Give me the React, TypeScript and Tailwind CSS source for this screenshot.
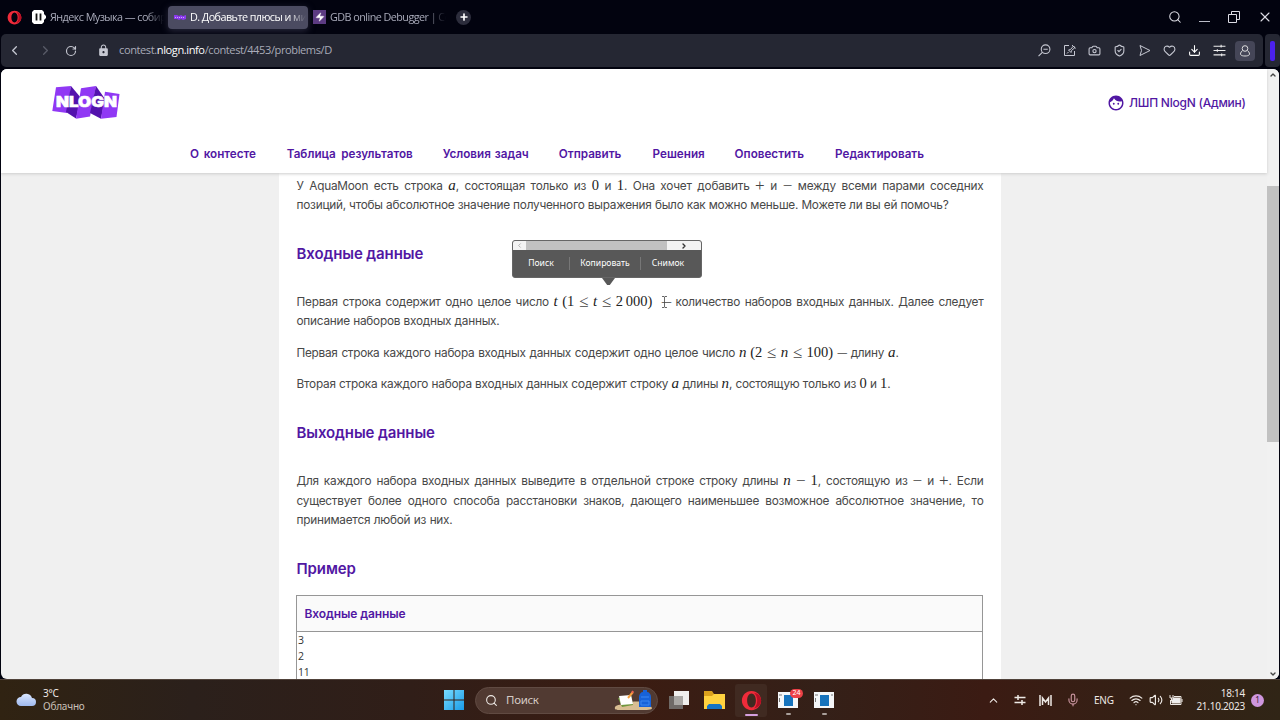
import type { ReactNode } from 'react';
import {
  Camera, ChevronDown, ChevronLeft, ChevronRight, ChevronUp, Download, Heart, Mic,
  Plus, RotateCw, Search, ShieldCheck, Volume2, Wifi, X, Zap,
} from 'lucide-react';
import { MdFace, MdLock } from 'react-icons/md';

const navItems = [
  { label: 'О контесте', width: 'w-[66px]', gap: 'mr-[30.8px]' },
  { label: 'Таблица результатов', width: 'w-[126px]', gap: 'mr-[30px]' },
  { label: 'Условия задач', width: 'w-[86px]', gap: 'mr-[30px]' },
  { label: 'Отправить', width: 'w-[64px]', gap: 'mr-[29.8px]' },
  { label: 'Решения', width: 'w-[52px]', gap: 'mr-[30px]' },
  { label: 'Оповестить', width: 'w-[71px]', gap: 'mr-[29.5px]' },
  { label: 'Редактировать', width: 'w-[90px]', gap: '' },
];

function Line({ width = 'w-[687px]', children }: { width?: string; children: ReactNode }) {
  return (
    <div className={`${width} h-[19.3px] leading-[19.3px] whitespace-nowrap [text-align-last:justify]`}>
      {children}
    </div>
  );
}

function Num({ children }: { children: ReactNode }) {
  return <span className="font-['Liberation_Serif',serif] text-[14.5px] leading-[0] tracking-normal text-[#222]">{children}</span>;
}

function Var({ children }: { children: ReactNode }) {
  return <span className="font-['Liberation_Serif',serif] text-[15px] leading-[0] tracking-normal italic text-[#222]">{children}</span>;
}

function Op({ children }: { children: ReactNode }) {
  return <span className="align-[-1px] font-['Liberation_Serif',serif] text-[17px] leading-[0] tracking-normal text-[#444]">{children}</span>;
}

function Dash() {
  return <span className="align-[1px] text-[9.500px] leading-[0]">—</span>;
}

function Heading({ children }: { children: ReactNode }) {
  return <h2 className="text-[15px] leading-[20px] font-semibold tracking-[-0.1px] text-[#5117a3] whitespace-nowrap">{children}</h2>;
}

function Logo() {
  return (
    <svg className="w-[70px] h-[36px]" viewBox="0 0 70 36">
      <path d="M5 2.300 20 1 16 28 1.300 26Z" fill="#9038f4" />
      <path d="M20 1 30 13 25 33.500 15 27Z" fill="#5312ad" />
      <path d="M30 3.300 45 1 39 31.500 25 33.700Z" fill="#9038f4" />
      <path d="M45 1 54 14 50 33.700 39 28Z" fill="#5312ad" />
      <path d="M54 6.700 68.500 9 65.500 32 50 33.700Z" fill="#9038f4" />
      <text x="5" y="22.300" fill="#fff" stroke="#fff" strokeWidth=".5" fontSize="14.500" fontWeight="900" fontFamily="Inter, sans-serif" textLength="61" lengthAdjust="spacingAndGlyphs">NLOGN</text>
    </svg>
  );
}

function OperaIcon({ className }: { className: string }) {
  return (
    <svg className={className} viewBox="0 0 24 24">
      <path fillRule="evenodd" fill="#ef2b3a" d="M12 1C5.600 1 1 6 1 12s4.600 11 11 11 11-5 11-11S18.400 1 12 1Zm0 3c3 0 5 3.600 5 8s-2 8-5 8-5-3.600-5-8 2-8 5-8Z" />
      <path fill="#b70f24" d="M15 3c5 1 8 4.600 8 9s-3 8-8 9c2-2 3.500-5 3.500-9S17 5 15 3Z" />
    </svg>
  );
}

function WindowIcon() {
  return (
    <svg className="w-5 h-4" viewBox="0 0 20 16">
      <path fill="#f4f6f8" d="M0 0h20v16H0z" />
      <path fill="#1673bd" d="M6 3h9v11H6z" />
      <path stroke="#777" d="M1 3h3M1.500 6v4M17 3h2" />
    </svg>
  );
}

function TabBar() {
  return (
    <div className="flex h-[34px] shrink-0 items-center font-['Open_Sans',sans-serif] text-[10.8px] tracking-[-0.55px] text-[#a9abba]">
      <OperaIcon className="ml-[7px] h-[15px] w-[15px]" />
      <svg className="ml-[10px] h-[14px] w-[14px]" viewBox="0 0 14 14">
        <path fill="#fff" d="M2 0h8l2 2v2l2 2v2l-2 2v2l-2 2H2l-2-2V2Z" />
        <path stroke="#111" strokeWidth="1.800" d="M4.500 3.500v7M8.500 3.500v7" />
      </svg>
      <span className="ml-[4px] w-[114px] whitespace-nowrap [mask-image:linear-gradient(90deg,#000_85%,transparent)]">Яндекс Музыка — собир</span>
      <div className="ml-[4px] flex h-[23px] w-[140px] items-center rounded-[4px] bg-[#4b4b61] pl-[6px] text-white shadow-[0_2px_7px_#28283c]">
        <svg className="h-[7px] w-[12px] shrink-0" viewBox="0 0 12 7">
          <path fill="#8b39ed" d="M0 1h3l2 1 2-1 2 1 3-1v4l-3 1-2-1-2 1-2-1H0Z" />
          <path stroke="#d2aaff" strokeDasharray="1 1" d="M1 3.500h10" />
        </svg>
        <span className="ml-[4px] w-[116px] whitespace-nowrap [mask-image:linear-gradient(90deg,#000_85%,transparent)]">D. Добавьте плюсы и ми</span>
      </div>
      <div className="ml-[5px] flex h-[14px] w-[13px] items-center justify-center bg-[#5c3b82]">
        <Zap className="h-[10px] w-[10px] fill-white text-white" strokeWidth={1} />
      </div>
      <span className="ml-[4px] w-[116px] whitespace-nowrap [mask-image:linear-gradient(90deg,#000_82%,transparent)]">GDB online Debugger | Co</span>
      <div className="ml-[10px] flex h-[15px] w-[15px] items-center justify-center rounded-full bg-[#2c2d3c]">
        <Plus className="h-[10px] w-[10px] text-white" strokeWidth={4} />
      </div>
      <div className="ml-auto flex items-center text-[#dddde5]">
        <Search className="mr-[17px] h-[14px] w-[14px]" strokeWidth={1.800} />
        <span className="mt-[9px] mr-[18px] h-px w-[11px] bg-[#bbbcc7]" />
        <svg className="mr-[17px] h-3 w-3" viewBox="0 0 12 12" fill="none" stroke="currentColor">
          <path d="M.5 3.500h8v8h-8zM3.500 3V.5h8v8H9" />
        </svg>
        <X className="mr-[7px] h-[16px] w-[16px]" strokeWidth={1.600} />
      </div>
    </div>
  );
}

function AddressBar() {
  return (
    <div className="flex h-[33px] shrink-0 gap-[2px] pl-px">
      <div className="flex flex-1 items-center rounded-[5px] bg-[#252733] text-[#c6c8d2]">
        <ChevronLeft className="ml-[6px] h-[15px] w-[15px]" strokeWidth={2} />
        <ChevronRight className="ml-[16px] h-[15px] w-[15px] text-[#5a5c69]" strokeWidth={2} />
        <RotateCw className="ml-[12px] h-[12px] w-[12px]" strokeWidth={2.300} />
        <MdLock className="ml-[20px] h-[13px] w-[13px]" />
        <span className="ml-[9px] w-[214px] pb-px font-['Open_Sans',sans-serif] text-[11.1px] tracking-[-0.42px] whitespace-nowrap text-[#a9abb8]">
          contest.<span className="text-white">nlogn.info</span>/contest/4453/problems/D
        </span>
        <div className="ml-auto flex items-center gap-[12px]">
          <svg className="h-[13px] w-[13px]" viewBox="0 0 12 12" fill="none" stroke="currentColor">
            <circle cx="7" cy="4.800" r="4" /><path d="m4 7.700-3.500 3.500M5 4.800h4" />
          </svg>
          <svg className="h-[13px] w-[13px]" viewBox="0 0 13 13" fill="none" stroke="currentColor">
            <path d="M6 1.500H1.500v10h10V7M4 9.500l1.500-1.500M5.500 6l2-.5 3-3.500 1.500 1.500-3.500 3-.5 2ZM9 1l3.500 3.500" />
          </svg>
          <Camera className="h-[13px] w-[13px]" />
          <ShieldCheck className="h-[13px] w-[13px]" />
          <svg className="h-[13px] w-[13px]" viewBox="0 0 13 13" fill="none" stroke="currentColor" strokeLinejoin="round">
            <path d="M2 1.500 12 6.500 2 11.500 3.500 6.500Z" />
          </svg>
          <Heart className="h-[13px] w-[13px]" />
          <Download className="h-[13px] w-[13px] text-white" />
          <svg className="h-[13px] w-[13px]" viewBox="0 0 12 12" fill="none" stroke="#eee">
            <path d="M.5 2h11M.5 6h11M.5 10h11M7.500.8v2.400M4 4.800v2.400M8 8.800v2.400" />
          </svg>
          <div className="-ml-[3px] mr-[8px] flex h-5 w-5 items-center justify-center rounded-[4px] bg-[#454657]">
            <svg className="h-3 w-3" viewBox="0 0 12 12" fill="none" stroke="#ddd">
              <circle cx="6" cy="3.500" r="2.800" /><path d="M3.500 5.500C-.5 9.500 2 11 6 11s6.500-1.500 2.500-5.500" />
            </svg>
          </div>
        </div>
      </div>
      <div className="flex w-[15px] items-center justify-center rounded-[4px] bg-[#252733]">
        <span className="h-5 w-[5px] rounded-[2px] bg-[#4b21ee]" />
      </div>
    </div>
  );
}

function SelectionPopup() {
  return (
    <div className="absolute top-[171px] left-[511px] w-[190px] font-['Noto_Sans',sans-serif] text-[8.600px] text-white">
      <div className="overflow-hidden rounded-[3px] border border-[#666] bg-[#585858]">
        <div className="flex h-[9px] items-center bg-[#f3f3f3]">
          <ChevronLeft className="h-[7px] w-[13px] text-[#aaa]" strokeWidth={3} />
          <span className="h-full w-[141px] bg-[#c1c1c1]" />
          <ChevronRight className="h-[8px] w-[34px] text-[#333]" strokeWidth={4} />
        </div>
        <div className="flex h-[27px] items-center">
          <span className="w-[56px] text-center">Поиск</span>
          <span className="h-[13px] w-px bg-[#777]" />
          <span className="w-[70px] text-center">Копировать</span>
          <span className="h-[13px] w-px bg-[#777]" />
          <span className="w-[54px] text-center">Снимок</span>
        </div>
      </div>
      <div className="ml-[90px] h-[7px] w-[13px] bg-[#585858] [clip-path:polygon(0_0,100%_0,60%_100%,40%_100%)]" />
    </div>
  );
}

function Page() {
  return (
    <main className="relative mx-px mt-[2px] flex h-[610px] shrink-0 overflow-hidden rounded-[6px] bg-[#f0f0f0] font-[Inter,sans-serif]">
      <div className="flex w-[1266px] flex-col">
        <header className="z-10 h-[104px] shrink-0 bg-white shadow-[0_1px_3px_#ccc]">
          <div className="flex h-[68px] items-center justify-between pr-[21px] pl-[50px]">
            <Logo />
            <div className="flex items-center text-[12px] font-medium tracking-[-0.23px] text-[#5117a3]">
              <MdFace className="mr-[4px] h-[18px] w-[18px]" />
              <span className="w-[117px] whitespace-nowrap">ЛШП NlogN (Админ)</span>
            </div>
          </div>
          <nav className="flex h-[36px] items-center pl-[189px] text-[11.7px] font-semibold text-[#5117a3]">
            {navItems.map((item) => (
              <a key={item.label} className={`${item.width} ${item.gap} whitespace-nowrap [text-align-last:justify]`}>{item.label}</a>
            ))}
          </nav>
        </header>

        <article className="ml-[278px] w-[722px] flex-1 overflow-hidden bg-white pl-[17.5px] text-[11.8px] tracking-[-0.23px] text-[#484848]">
          <div className="mt-[3.500px]">
            <Line>У AquaMoon есть строка <Var>a</Var>, состоящая только из <Num>0</Num> и <Num>1</Num>. Она хочет добавить <Op>+</Op> и <Op>−</Op> между всеми парами соседних</Line>
            <Line width="w-[652px]">позиций, чтобы абсолютное значение полученного выражения было как можно меньше. Можете ли вы ей помочь?</Line>
          </div>
          <div className="mt-[29px]"><Heading>Входные данные</Heading></div>
          <div className="mt-[29px]">
            <Line>Первая строка содержит одно целое число <Var>t</Var> <Num>(1</Num> <Op>≤</Op> <Var>t</Var> <Op>≤</Op> <Num>2&#8201;000)</Num> &nbsp;<Dash /> количество наборов входных данных. Далее следует</Line>
            <Line width="w-[203px]">описание наборов входных данных.</Line>
          </div>
          <div className="mt-[12px]">
            <Line width="w-[602px]"><span className="tracking-[-0.28px]">Первая строка каждого набора входных данных содержит одно целое число <Var>n</Var> <Num>(2 </Num><Op>≤</Op><Num> </Num><Var>n</Var><Num> </Num><Op>≤</Op><Num> 100) </Num> <Dash /> длину <Var>a</Var>.</span></Line>
          </div>
          <div className="mt-[12px]">
            <Line width="w-[594px]">Вторая строка каждого набора входных данных содержит строку <Var>a</Var> длины <Var>n</Var>, состоящую только из <Num>0</Num> и <Num>1</Num>.</Line>
          </div>
          <div className="mt-[29px]"><Heading>Выходные данные</Heading></div>
          <div className="mt-[29px]">
            <Line>Для каждого набора входных данных выведите в отдельной строке строку длины <Var>n</Var> <Op>−</Op> <Num>1</Num>, состоящую из <Op>−</Op> и <Op>+</Op>. Если</Line>
            <Line>существует более одного способа расстановки знаков, дающего наименьшее возможное абсолютное значение, то</Line>
            <Line width="w-[156px]">принимается любой из них.</Line>
          </div>
          <div className="mt-[29px]"><Heading>Пример</Heading></div>
          <div className="mt-[16px] -ml-[0.5px] h-[100px] w-[687px] border border-[#969696]">
            <div className="flex h-[36px] items-center border-b border-[#969696] bg-[#fafafa] pl-[7.5px] text-[12px] font-semibold tracking-[-0.1px] text-[#5117a3]">Входные данные</div>
            <pre className="pt-px pl-px font-['Open_Sans',sans-serif] text-[10.500px] leading-[15.7px] text-[#333]">{'3\n2\n11'}</pre>
          </div>
        </article>
      </div>
      <div className="flex w-[12px] flex-col items-center bg-[#f1f1f1]">
        <ChevronUp className="mt-[2px] h-2 w-2 text-[#444]" strokeWidth={4} />
        <span className="mt-[107px] h-[256px] w-full bg-[#c1c1c1]" />
        <ChevronDown className="mt-auto mb-px h-2 w-2 text-[#444]" strokeWidth={4} />
      </div>
      <SelectionPopup />
      <svg className="absolute top-[227px] left-[660px] h-[12px] w-[7px]" viewBox="0 0 7 12" fill="none" stroke="#444" strokeWidth=".8">
        <path d="M1 .5h2l.5.5.5-.5h2M3.500 1v10M1 11.500h2l.5-.5.5.5h2" />
      </svg>
    </main>
  );
}

function Taskbar() {
  return (
    <footer className="flex h-[41px] shrink-0 items-center border-t border-[#50423a] bg-[linear-gradient(90deg,#302312_0%,#2b201b_15%,#301e18_32%,#3b1c12_50%,#342018_64%,#3b1b13_77%,#352015_88%,#302516_100%)] font-['Noto_Sans',sans-serif] text-[#eee9e5]">
      <svg className="ml-[16px] h-[14px] w-[21px]" viewBox="0 0 21 14">
        <defs><linearGradient id="cloud" x2="0" y2="1"><stop stopColor="#d9e6ff" /><stop offset="1" stopColor="#9fb9ed" /></linearGradient></defs>
        <path fill="url(#cloud)" d="M5 13a4.500 4.500 0 0 1 0-9 6 6 0 0 1 11 1 4 4 0 0 1 0 8Z" />
      </svg>
      <div className="ml-[6px] w-[50px] text-[10px] leading-[13.5px] tracking-[-0.2px]">
        <div>3°C</div>
        <div className="text-[#c9c0b8]">Облачно</div>
      </div>
      <svg className="ml-[351px] h-5 w-5" viewBox="0 0 20 20">
        <defs><linearGradient id="win" x2="1" y2="1"><stop stopColor="#78dcff" /><stop offset="1" stopColor="#199be8" /></linearGradient></defs>
        <path fill="url(#win)" d="M0 0h9.500v9.500H0zM10.500 0H20v9.500h-9.500zM0 10.500h9.500V20H0zM10.500 10.500H20V20h-9.500z" />
      </svg>
      <div className="ml-[11px] flex h-[27px] w-[183px] items-center rounded-full border border-[#604a42] bg-[#513a32] pl-[9px]">
        <Search className="h-[13px] w-[13px]" strokeWidth={2} />
        <span className="ml-[8px] text-[11.5px] tracking-[-0.3px] text-[#d5cac5]">Поиск</span>
        <svg className="ml-auto mr-[4px] h-[22px] w-[39px]" viewBox="0 0 39 22">
          <path fill="#d8bd92" d="M1 18c2-3 7-2 12-4 8-3 22-2 25 5 0 2-5 2-12 2H6c-3 0-6 0-5-3Z" />
          <path fill="#70973e" d="m4 9 13-3 2 10-11 2Z" /><path fill="#fff" d="m5 7 12-1 2 9-12 1Z" />
          <path stroke="#f7a13d" strokeWidth="2" d="m14 9 5-6" /><path stroke="#ef624f" strokeWidth="2" d="m18 4 1-2" />
          <path fill="#1762d8" d="M25 18V8c0-3 2-5 4-5V1h4v2c2 0 4 2 4 5v10Z" /><path stroke="#3d86f0" d="M27 8h8M27 12h8v4h-8z" fill="none" />
        </svg>
      </div>
      <svg className="ml-[10px] h-5 w-[22px]" viewBox="0 0 22 20">
        <path fill="#f0efed" d="M6 1h15v14H6z" /><path fill="#757371" fillOpacity=".9" d="M1 6h14v13H1z" /><path fill="#aaa8a5" d="M6 6h9v9H6z" />
      </svg>
      <svg className="ml-[14px] h-5 w-[21px]" viewBox="0 0 21 20">
        <path fill="#dba11d" d="M0 1h8l2 3h10v8H0z" /><path fill="#ffd23f" d="M0 6h8l2-2h11v15H0z" /><path fill="#1674c4" d="M3 19v-3l2-2h11l2 2v3z" />
      </svg>
      <div className="ml-[10px] flex h-[33px] w-[32px] flex-col items-center rounded-[3px] bg-[#402a21] pt-[6px]">
        <OperaIcon className="h-[21px] w-[21px]" />
        <span className="mt-[3px] h-[2px] w-[13px] rounded bg-[#d5a0de]" />
      </div>
      <div className="relative ml-[11px] flex h-[33px] flex-col items-center pt-[8px]">
        <WindowIcon /><span className="mt-[5px] h-[2px] w-[5px] rounded bg-[#aaa09b]" />
        <span className="absolute top-[5px] left-[12px] flex h-[9px] w-[13px] items-center justify-center rounded-full bg-[#ec4148] text-[7px] text-white">24</span>
      </div>
      <div className="ml-[16px] flex h-[33px] flex-col items-center pt-[8px]">
        <WindowIcon /><span className="mt-[5px] h-[2px] w-[5px] rounded bg-[#aaa09b]" />
      </div>
      <div className="ml-auto flex items-center">
        <ChevronUp className="mr-[14px] h-[13px] w-[13px]" />
        <svg className="mr-[13px] h-[12px] w-[12px]" viewBox="0 0 12 12" fill="none" stroke="currentColor" strokeWidth="1.500"><path d="M.5 3.500h11M.5 8.500h11M4 1v5M8 6v5" /></svg>
        <svg className="mr-[14px] h-[11px] w-[13px]" viewBox="0 0 13 11" fill="none" stroke="currentColor" strokeWidth="1.500"><path d="M1 0v11M12 0v11M3.500 10V3l3 4 3-4v7" /></svg>
        <Mic className="mr-[14px] h-[14px] w-[14px] text-[#c6929c]" />
        <span className="mr-[15px] w-[20px] text-[10px] tracking-[-0.2px]">ENG</span>
        <Wifi className="mr-[6px] h-[14px] w-[14px]" />
        <Volume2 className="mr-[6px] h-[14px] w-[14px]" />
        <svg className="h-[12px] w-[14px]" viewBox="0 0 14 12" fill="none" stroke="currentColor"><path fill="#eee" d="M4 4h7v5H3V6" /><path d="M5 2.500h7v8H1.500V6M13 5v3M1 1v3h3V1M2.500 4v3" /></svg>
        <div className="ml-[6px] w-[56px] text-right text-[10px] leading-[13.5px] tracking-[-0.25px]">
          <div>18:14</div>
          <div>21.10.2023</div>
        </div>
        <span className="mr-[16px] ml-[6px] flex h-[13px] w-[13px] items-center justify-center rounded-full bg-[#cf96de] text-[8px] text-[#332035]">1</span>
      </div>
    </footer>
  );
}

export default function App() {
  return (
    <div className="flex h-[720px] w-[1280px] flex-col overflow-hidden bg-[#02030f] font-['Noto_Sans',sans-serif]">
      <TabBar />
      <AddressBar />
      <Page />
      <Taskbar />
    </div>
  );
}
